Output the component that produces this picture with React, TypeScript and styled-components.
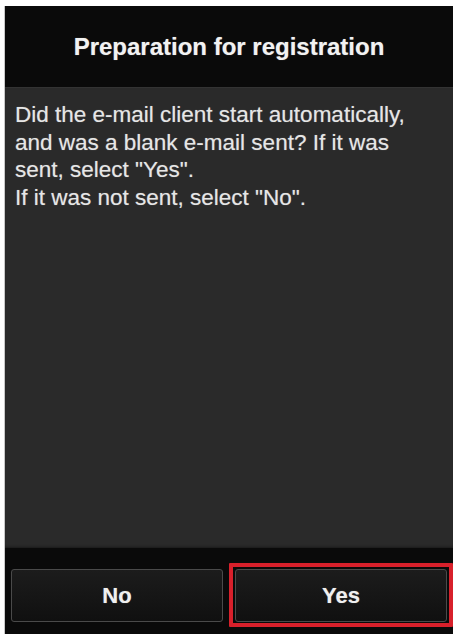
import React from "react";
import styled, { createGlobalStyle, css } from "styled-components";

interface ButtonProps {
  selected?: boolean;
}

const GlobalStyle = createGlobalStyle`
  html, body {
    margin: 0;
    padding: 0;
    background: #ffffff;
    height: 100%;
  }
  #root {
    height: 100%;
  }
`;

function App() {
  return (
    <>
      <GlobalStyle />
      <Page>
        <Screen>
          <Header>
            <Title>Preparation for registration</Title>
          </Header>
          <Body>
            <Message>
              Did the e-mail client start automatically, and was a blank e-mail
              sent? If it was sent, select "Yes".
              <br />
              If it was not sent, select "No".
            </Message>
          </Body>
          <Footer>
            <Button>No</Button>
            <Button selected>Yes</Button>
          </Footer>
        </Screen>
      </Page>
    </>
  );
}

export default App;

const Page = styled.div`
  height: 634px;
  padding: 6px 4px 0 5px;
  box-sizing: border-box;
  display: flex;
  overflow: hidden;
`;

const Screen = styled.div`
  flex: 1;
  display: flex;
  flex-direction: column;
  background: #0b0b0b;
  box-shadow: -1px 0 0 #c8c8c8;
  font-family: "Liberation Sans", Arial, sans-serif;
`;

const Header = styled.div`
  height: 81px;
  flex-shrink: 0;
  display: flex;
  align-items: center;
  justify-content: center;
  background: #0a0a0a;
`;

const Title = styled.div`
  font-size: 24px;
  font-weight: bold;
  color: #f2f2f2;
  text-shadow: 0 0 1px rgba(255, 255, 255, 0.45);
`;

const Body = styled.div`
  flex: 1;
  background: #2a2a2a;
  border-top: 1px solid #333;
  padding: 13px 20px 10px 10px;
  box-sizing: border-box;
  box-shadow: inset 0 -3px 3px -2px #1a1a1a;
`;

const Message = styled.p`
  margin: 0;
  font-size: 22.5px;
  line-height: 27.5px;
  color: #e6e6e6;
  text-shadow: 0 0 1px rgba(255, 255, 255, 0.4);
`;

const Footer = styled.div`
  height: 86px;
  flex-shrink: 0;
  box-sizing: border-box;
  padding: 21px 6px 12px 6px;
  display: grid;
  grid-template-columns: 1fr 1fr;
  gap: 12px;
  background: #0a0a0a;
`;

const Button = styled.div<ButtonProps>`
  position: relative;
  display: flex;
  align-items: center;
  justify-content: center;
  border: 1px solid #4a4a4a;
  border-radius: 3px;
  background: linear-gradient(#1c1c1c, #101010);
  color: #f0f0f0;
  font-size: 22px;
  font-weight: bold;
  text-shadow: 0 0 1px rgba(255, 255, 255, 0.45);

  ${(props) =>
    props.selected &&
    css`
      &::after {
        content: "";
        position: absolute;
        top: -7px;
        left: -7px;
        right: -7px;
        bottom: -6px;
        border: 4px solid #d8202b;
        border-radius: 1px;
        pointer-events: none;
      }
    `}
`;
